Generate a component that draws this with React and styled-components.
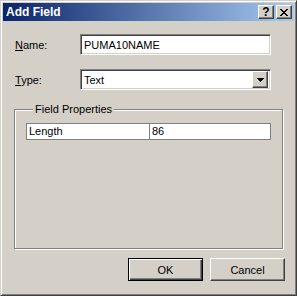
import React from 'react';
import styled, { createGlobalStyle } from 'styled-components';

const face = '#d4d0c8';

const Global = createGlobalStyle`
  html, body {
    margin: 0;
    padding: 0;
    background: ${face};
  }
  body {
    font-family: "Liberation Sans", Arial, sans-serif;
    font-size: 11px;
    color: #000;
  }
`;

const Window = styled.div`
  box-sizing: border-box;
  width: 297px;
  height: 296px;
  background: ${face};
  border: 1px solid;
  border-color: ${face} #404040 #404040 ${face};
  box-shadow: inset 1px 1px #fff, inset -1px -1px #808080;
  padding: 2px;
  display: flex;
  flex-direction: column;
`;

const TitleBar = styled.div`
  height: 18px;
  background: linear-gradient(to right, #0a246a, #a6caf0);
  display: flex;
  align-items: center;
  padding: 0 2px 0 2px;
  gap: 2px;
`;

const Title = styled.div`
  flex: 1;
  color: #fff;
  font-weight: bold;
  font-size: 12px;
  padding-left: 1px;
`;

const raised = `
  background: ${face};
  border: 1px solid;
  border-color: #fff #404040 #404040 #fff;
  box-shadow: inset -1px -1px #808080, inset 1px 1px ${face};
`;

const CaptionButton = styled.div`
  box-sizing: border-box;
  width: 16px;
  height: 14px;
  ${raised}
  display: flex;
  align-items: center;
  justify-content: center;
  font-weight: bold;
  font-size: 12px;
  line-height: 1;
`;

const Body = styled.div`
  flex: 1;
  display: flex;
  flex-direction: column;
  padding: 13px 9px 10px 11px;
`;

const FieldRow = styled.div`
  display: grid;
  grid-template-columns: 66px 191px;
  align-items: center;
  margin-bottom: ${p => p.$gap || 0}px;
`;

const Label = styled.span`
  padding-left: 1px;
  u {
    text-decoration: underline;
    text-underline-offset: 1px;
  }
`;

const sunken = `
  background: #fff;
  border: 1px solid;
  border-color: #808080 #fff #fff #808080;
  box-shadow: inset 1px 1px #404040, inset -1px -1px ${face};
`;

const TextBox = styled.div`
  box-sizing: border-box;
  height: 21px;
  ${sunken}
  display: flex;
  align-items: center;
  padding: 0 3px;
`;

const Combo = styled(TextBox)`
  padding: 2px 2px 2px 3px;
  justify-content: space-between;
`;

const DropButton = styled.div`
  box-sizing: border-box;
  width: 16px;
  height: 17px;
  ${raised}
  display: flex;
  align-items: center;
  justify-content: center;
`;

const GroupBox = styled.div`
  box-sizing: border-box;
  width: 269px;
  height: 140px;
  margin-top: 19px;
  border: 1px solid #808080;
  box-shadow: inset 1px 1px #fff, 1px 1px #fff;
  padding: 0 11px;
  display: flex;
  flex-direction: column;
`;

const Legend = styled.span`
  align-self: flex-start;
  margin: -7px 0 0 7px;
  padding: 0 2px 0 2px;
  background: ${face};
  line-height: 13px;
`;

const PropGrid = styled.div`
  display: grid;
  grid-template-columns: 122px 1fr;
  margin-top: 7px;
  border: 1px solid #808080;
  background: #fff;
`;

const Cell = styled.div`
  height: 15px;
  line-height: 15px;
  padding-left: 2px;
  border-left: ${p => (p.$divider ? '1px solid #808080' : 'none')};
`;

const ButtonRow = styled.div`
  display: flex;
  justify-content: flex-end;
  gap: 7px;
  margin-top: 9px;
`;

const PushButton = styled.div`
  box-sizing: border-box;
  width: 75px;
  height: 23px;
  display: flex;
  align-items: center;
  justify-content: center;
  ${raised}
  ${p =>
    p.$default &&
    `
    border: 1px solid #000;
    box-shadow: inset 1px 1px #fff, inset -1px -1px #404040, inset -2px -2px #808080;
  `}
`;

const CloseGlyph = () => (
  <svg width="8" height="7" viewBox="0 0 8 7" shapeRendering="crispEdges">
    <path d="M0 0h2v1H0zM6 0h2v1H6zM1 1h2v1H1zM5 1h2v1H5zM2 2h4v1H2zM3 3h2v1H3zM2 4h4v1H2zM1 5h2v1H1zM5 5h2v1H5zM0 6h2v1H0zM6 6h2v1H6z" fill="#000" />
  </svg>
);

const Arrow = () => (
  <svg width="7" height="4" viewBox="0 0 7 4" shapeRendering="crispEdges">
    <path d="M0 0h7v1H0zM1 1h5v1H1zM2 2h3v1H2zM3 3h1v1H3z" fill="#000" />
  </svg>
);

export default function App() {
  return (
    <>
      <Global />
      <Window>
        <TitleBar>
          <Title>Add Field</Title>
          <CaptionButton>?</CaptionButton>
          <CaptionButton>
            <CloseGlyph />
          </CaptionButton>
        </TitleBar>
        <Body>
          <FieldRow $gap={14}>
            <Label>
              <u>N</u>ame:
            </Label>
            <TextBox>PUMA10NAME</TextBox>
          </FieldRow>
          <FieldRow>
            <Label>
              <u>T</u>ype:
            </Label>
            <Combo>
              Text
              <DropButton>
                <Arrow />
              </DropButton>
            </Combo>
          </FieldRow>
          <GroupBox>
            <Legend>Field Properties</Legend>
            <PropGrid>
              <Cell>Length</Cell>
              <Cell $divider>86</Cell>
            </PropGrid>
          </GroupBox>
          <ButtonRow>
            <PushButton $default>OK</PushButton>
            <PushButton>Cancel</PushButton>
          </ButtonRow>
        </Body>
      </Window>
    </>
  );
}
